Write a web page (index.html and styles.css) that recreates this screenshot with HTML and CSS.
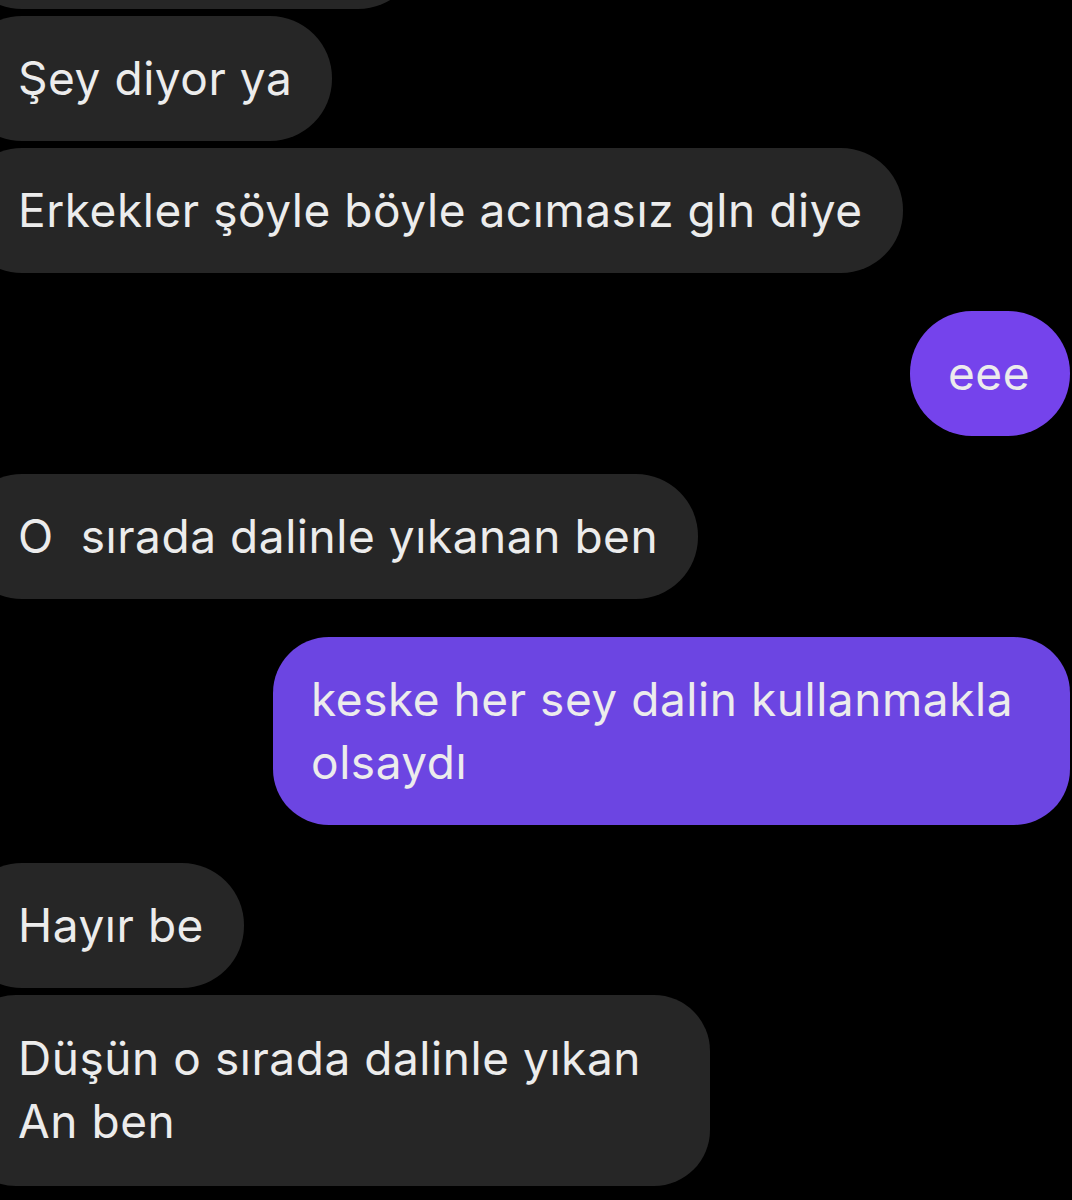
FILE: index.html
```html
<!DOCTYPE html>
<html lang="tr">
<head>
<meta charset="utf-8">
<link rel="stylesheet" href="styles.css">
</head>
<body>
<div class="chat">
  <div class="msg in top"></div>
  <div class="msg in">Şey diyor ya</div>
  <div class="msg in tight">Erkekler şöyle böyle acımasız gln diye</div>
  <div class="msg out gap">eee</div>
  <div class="msg in gap">O&nbsp; sırada dalinle yıkanan ben</div>
  <div class="msg out gap wide">keske her sey dalin kullanmakla<br>olsaydı</div>
  <div class="msg in gap">Hayır be</div>
  <div class="msg in tight b7">Düşün o sırada dalinle yıkan<br>An ben</div>
</div>
</body>
</html>
```

FILE: styles.css
```css
html, body {
  margin: 0;
  padding: 0;
  background: #000;
  height: 1200px;
  overflow: hidden;
}

.chat {
  display: flex;
  flex-direction: column;
  align-items: flex-start;
  font-family: Inter, "Liberation Sans", Arial, sans-serif;
  font-size: 46px;
  letter-spacing: 0.55px;
  line-height: 63px;
  color: #ececec;
}

.msg {
  box-sizing: border-box;
  border-radius: 62px;
  padding: 31px 40px 31px 38px;
  white-space: nowrap;
}

.in {
  background: #262626;
  margin-left: -40px;
  padding-left: 58px;
}

.out {
  align-self: flex-end;
  margin-right: 2px;
  background: #7543ec;
}

.top {
  margin-top: -116px;
  width: 460px;
  height: 125px;
}

.gap {
  margin-top: 38px;
}

.tight {
  margin-top: 7px;
}

.in + .in {
  margin-top: 7px;
}

.wide {
  width: 797px;
  background: #6c45e2;
  border-radius: 56px;
}

.b7 {
  width: 750px;
  border-radius: 56px;
  padding-top: 32px;
  padding-bottom: 33px;
}
```
